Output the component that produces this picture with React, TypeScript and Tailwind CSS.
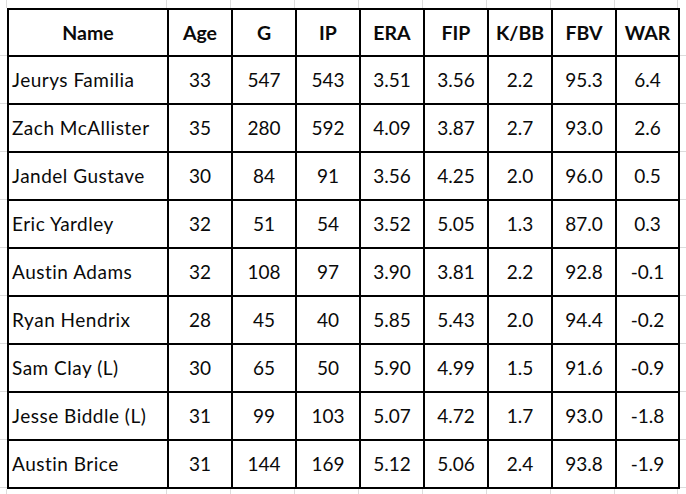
import React from "react";

const headers = ["Name", "Age", "G", "IP", "ERA", "FIP", "K/BB", "FBV", "WAR"];
const rows: string[][] = [
  ["Jeurys Familia", "33", "547", "543", "3.51", "3.56", "2.2", "95.3", "6.4"],
  ["Zach McAllister", "35", "280", "592", "4.09", "3.87", "2.7", "93.0", "2.6"],
  ["Jandel Gustave", "30", "84", "91", "3.56", "4.25", "2.0", "96.0", "0.5"],
  ["Eric Yardley", "32", "51", "54", "3.52", "5.05", "1.3", "87.0", "0.3"],
  ["Austin Adams", "32", "108", "97", "3.90", "3.81", "2.2", "92.8", "-0.1"],
  ["Ryan Hendrix", "28", "45", "40", "5.85", "5.43", "2.0", "94.4", "-0.2"],
  ["Sam Clay (L)", "30", "65", "50", "5.90", "4.99", "1.5", "91.6", "-0.9"],
  ["Jesse Biddle (L)", "31", "99", "103", "5.07", "4.72", "1.7", "93.0", "-1.8"],
  ["Austin Brice", "31", "144", "169", "5.12", "5.06", "2.4", "93.8", "-1.9"],
];

const widths = ["w-[160px]", "w-[64px]", "w-[64px]", "w-[64px]", "w-[64px]", "w-[64px]", "w-[64px]", "w-[64px]", "w-[63px]"];

export default function App() {
  return (
    <div
      className="w-[686px] h-[494px] bg-white text-[#0a0a0a] overflow-hidden flex flex-col"
      style={{ fontFamily: "Lato, 'Open Sans', sans-serif" }}
    >
      {/* top gutter */}
      <div className="flex h-[8px] shrink-0">
        <div className="w-[7px] shrink-0 border-r border-[#dcdcdc]" />
        {widths.map((w, i) => (
          <div key={i} className={`${w} shrink-0 border-r border-[#dcdcdc]`} />
        ))}
        <div className="flex-1" />
      </div>
      <div className="flex">
        {/* left gutter */}
        <div className="w-[7px] shrink-0 flex flex-col">
          {Array.from({ length: 10 }).map((_, i) => (
            <div key={i} className="h-[48px] box-border border-b border-[#dcdcdc]" />
          ))}
        </div>
        {/* table */}
        <div className="flex flex-col border-l-2 border-t-2 border-black">
          <div className="flex h-[47px] box-border">
            {headers.map((h, i) => (
              <div
                key={i}
                className={`${widths[i]} box-border border-r-2 border-b-2 border-black flex items-center justify-center font-bold text-[19.5px]`}
              >
                {h}
              </div>
            ))}
          </div>
          {rows.map((r, ri) => (
            <div key={ri} className="flex h-[48px]">
              {r.map((c, i) => (
                <div
                  key={i}
                  className={`${widths[i]} box-border border-r-2 border-b-2 border-black flex items-center text-[19px] ${
                    i === 0 ? "justify-start pl-[3px] tracking-[0.5px]" : "justify-center"
                  }`}
                >
                  {c}
                </div>
              ))}
            </div>
          ))}
        </div>
        {/* right gutter */}
        <div className="flex-1 flex flex-col">
          {Array.from({ length: 10 }).map((_, i) => (
            <div key={i} className="h-[48px] box-border border-b border-[#dcdcdc]" />
          ))}
        </div>
      </div>
      <div className="flex flex-1">
        <div className="w-[7px] shrink-0 border-r border-[#dcdcdc]" />
        {widths.map((w, i) => (
          <div key={i} className={`${w} shrink-0 border-r border-[#dcdcdc]`} />
        ))}
        <div className="flex-1" />
      </div>
    </div>
  );
}
